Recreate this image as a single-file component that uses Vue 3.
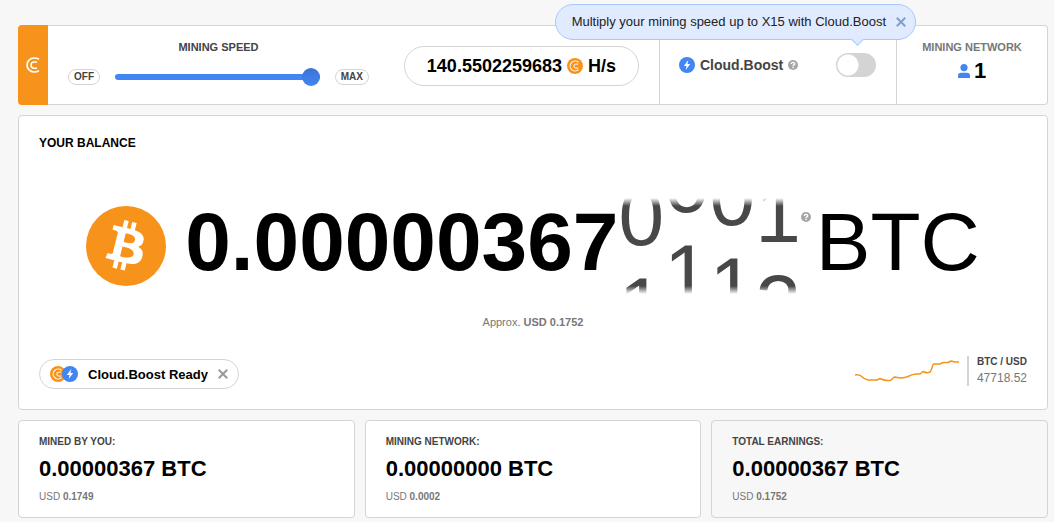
<script setup>
import { ref } from 'vue'

const speed = ref(100)
const boost = ref(false)

const digitHeight = 90
const reels = [
  { digits: [0, 1], progress: 26 },
  { digits: [0, 1], progress: 59 },
  { digits: [0, 1], progress: 46 },
  { digits: [1, 2], progress: 29 },
]

const stats = [
  { label: 'MINED BY YOU:', value: '0.00000367 BTC', usd: '0.1749', muted: false },
  { label: 'MINING NETWORK:', value: '0.00000000 BTC', usd: '0.0002', muted: false },
  { label: 'TOTAL EARNINGS:', value: '0.00000367 BTC', usd: '0.1752', muted: true },
]
</script>

<template>
  <main class="page">
    <section class="topbar">
      <div class="brand">
        <svg width="16" height="16" viewBox="0 0 16 16" fill="none" stroke="#fff" aria-hidden="true">
          <path d="M14 2.2Q12 1 9 1A7 7 0 0 0 9 15Q12 15 14 13.800" stroke-width="1.7" />
          <path d="M12 4.900H9.200A3.200 3.200 0 1 0 9.200 11.300H12" stroke-width="1.500" />
        </svg>
      </div>

      <div class="speed">
        <div class="slider-block">
          <label class="speed-title" for="speed">MINING SPEED</label>
          <div class="slider-row">
            <button class="tag" type="button" @click="speed = 0">OFF</button>
            <input id="speed" v-model="speed" class="slider" type="range" min="0" max="100" />
            <button class="tag" type="button" @click="speed = 100">MAX</button>
          </div>
        </div>
        <div class="hash">
          <span>140.5502259683</span>
          <svg width="16" height="16" viewBox="0 0 16 16" fill="none" stroke="#fff" aria-hidden="true">
            <circle cx="8" cy="8" r="8" fill="#f7931a" stroke="none" />
            <path d="M11.5 4.3A5 5 0 1 0 11.5 11.7" stroke-width="1.1" />
            <path d="M11.2 6.1H8.8A2 2 0 1 0 8.8 10.1H11.2" stroke-width="1" />
          </svg>
          <span>H/s</span>
        </div>
      </div>

      <div class="boost">
        <svg width="16" height="16" viewBox="0 0 16 16" aria-hidden="true">
          <circle cx="8" cy="8" r="8" fill="#4285f4" />
          <path d="M9.3 2.9L4.8 8.9H7.5L6.7 13.1L11.2 7.1H8.5Z" fill="#fff" />
        </svg>
        <label class="boost-name" for="boost">Cloud.Boost</label>
        <svg width="10" height="10" viewBox="0 0 10 10" aria-hidden="true">
          <circle cx="5" cy="5" r="5" fill="#a6a6a6" />
          <path d="M3.3 3.9C3.3 1.9 6.7 1.9 6.7 3.9C6.7 4.9 5.1 4.9 5.1 6" fill="none" stroke="#fff" stroke-width="1.4" />
          <rect x="4.3" y="6.7" width="1.5" height="1.4" fill="#fff" />
        </svg>
        <div class="switch-wrap">
          <input id="boost" v-model="boost" class="switch" type="checkbox" role="switch" />
          <div class="tooltip" role="tooltip">
            <span>Multiply your mining speed up to X15 with Cloud.Boost</span>
            <button class="close blue" type="button" aria-label="Close tip">
              <svg width="10" height="10" viewBox="0 0 10 10"><path d="M.8 .8L9.2 9.2M9.2 .8L.8 9.2" /></svg>
            </button>
          </div>
        </div>
      </div>

      <div class="network">
        <div class="network-title">MINING NETWORK</div>
        <div class="network-count">
          <svg width="12" height="14" viewBox="0 0 12 14" fill="#4285f4" aria-hidden="true">
            <circle cx="6" cy="3.6" r="3.6" />
            <path d="M0 14V12Q0 8.8 3.2 8.8H8.8Q12 8.8 12 12V14Z" />
          </svg>
          <span>1</span>
        </div>
      </div>
    </section>

    <section class="balance">
      <h2>YOUR BALANCE</h2>
      <div class="amount">
        <svg class="coin" viewBox="0 0 64 64" aria-hidden="true">
          <circle cx="32" cy="32" r="32" fill="#f7931a" />
          <path fill="#fff" d="M46.103 27.444c.637-4.258-2.605-6.547-7.038-8.074l1.438-5.768-3.511-.875-1.4 5.616c-.923-.23-1.871-.447-2.813-.662l1.41-5.653-3.509-.875-1.439 5.766c-.764-.174-1.514-.346-2.242-.527l.004-.018-4.842-1.209-.934 3.75s2.605.597 2.55.634c1.422.355 1.679 1.296 1.636 2.042l-1.638 6.571c.098.025.225.061.365.117l-.371-.092-2.296 9.205c-.174.432-.615 1.08-1.609.834.035.051-2.552-.637-2.552-.637l-1.743 4.019 4.569 1.139c.85.213 1.683.436 2.503.646l-1.453 5.834 3.507.875 1.439-5.772c.958.26 1.888.5 2.798.726l-1.434 5.745 3.511.875 1.453-5.823c5.987 1.133 10.489.676 12.384-4.739 1.527-4.36-.076-6.875-3.226-8.515 2.294-.529 4.022-2.038 4.483-5.155zM38.081 38.693c-1.085 4.36-8.426 2.003-10.806 1.412l1.928-7.729c2.38.594 10.012 1.77 8.878 6.317zM39.167 27.381c-.99 3.966-7.1 1.951-9.082 1.457l1.748-7.01c1.982.494 8.365 1.416 7.334 5.553z" />
        </svg>
        <span class="digits">0.00000367</span>
        <div class="reels">
          <div
            v-for="(reel, i) in reels"
            :key="i"
            :style="{ transform: `translateY(${-reel.progress}px)` }"
          >
            <span v-for="d in reel.digits" :key="d" class="reel-digit" :style="{ height: digitHeight + 'px' }">{{ d }}</span>
          </div>
        </div>
        <svg class="amount-help" width="10" height="10" viewBox="0 0 10 10" aria-hidden="true">
          <circle cx="5" cy="5" r="5" fill="#a6a6a6" />
          <path d="M3.3 3.9C3.3 1.9 6.7 1.9 6.7 3.9C6.7 4.9 5.1 4.9 5.1 6" fill="none" stroke="#fff" stroke-width="1.4" />
          <rect x="4.3" y="6.7" width="1.5" height="1.4" fill="#fff" />
        </svg>
        <span class="unit">BTC</span>
      </div>
      <div class="approx">Approx. <b>USD 0.1752</b></div>
      <div class="balance-foot">
        <div class="ready">
          <svg width="28" height="16" viewBox="0 0 28 16" fill="none" stroke="#fff" aria-hidden="true">
            <circle cx="8" cy="8" r="8" fill="#f7931a" stroke="none" />
            <path d="M11.5 4.3A5 5 0 1 0 11.5 11.7" stroke-width="1.1" />
            <path d="M11.2 6.1H8.8A2 2 0 1 0 8.8 10.1H11.2" stroke-width="1" />
            <circle cx="20" cy="8" r="8" fill="#4285f4" stroke="none" />
            <path d="M21.3 2.9L16.8 8.9H19.5L18.7 13.1L23.2 7.1H20.5Z" fill="#fff" stroke="none" />
          </svg>
          <span>Cloud.Boost Ready</span>
          <button class="close" type="button" aria-label="Dismiss">
            <svg width="10" height="10" viewBox="0 0 10 10"><path d="M.8 .8L9.2 9.2M9.2 .8L.8 9.2" /></svg>
          </button>
        </div>
        <div class="rate">
          <svg width="104" height="30" viewBox="0 0 104 30" fill="none" stroke="#f7931a" stroke-width="1.5" stroke-linejoin="round" aria-hidden="true">
            <path d="M0 19C2 18.500 4 18 6 20S10 23.500 13 24H22L25 22.500C28 24 31 25 35 24.500C38 24 37 21 40 21C44 22 50 22 53 20.500S58 18 61 18H65L68 15.500C71 17 73 17 75 16S77 8 79 8H85L88 6.500H93L96 5L100 6H104" />
          </svg>
          <div class="rate-text">
            <b>BTC / USD</b>
            <span>47718.52</span>
          </div>
        </div>
      </div>
    </section>

    <section class="stats">
      <article v-for="s in stats" :key="s.label" class="stat" :class="{ muted: s.muted }">
        <h3>{{ s.label }}</h3>
        <div class="stat-value">{{ s.value }}</div>
        <div class="stat-usd">USD <b>{{ s.usd }}</b></div>
      </article>
    </section>
  </main>
</template>

<style>
body {
  margin: 0;
  background: #f7f7f7;
}
</style>

<style scoped>
* {
  box-sizing: border-box;
}
.page {
  padding: 25px 6px 4px 18px;
  display: flex;
  flex-direction: column;
  gap: 10px;
  font-family: 'Liberation Sans', Arial, sans-serif;
  color: #000;
}
svg {
  display: block;
  flex: none;
}
button {
  font-family: inherit;
  cursor: pointer;
}
.topbar {
  display: grid;
  grid-template-columns: 30px 1fr 237px 151px;
  min-height: 80px;
}
.topbar > div {
  background: #fff;
  border: 1px solid #d4d4d4;
  border-left: 0;
}
.topbar > .brand {
  background: #f7931a;
  border: 0;
  border-radius: 4px 0 0 4px;
  display: flex;
  align-items: center;
  justify-content: center;
}
.speed {
  display: flex;
  justify-content: space-between;
  padding: 0 20px;
}
.slider-block {
  width: 301px;
  padding-top: 14px;
}
.speed-title {
  display: block;
  text-align: center;
  font-size: 11px;
  line-height: 14px;
  font-weight: bold;
  color: #444;
}
.slider-row {
  display: flex;
  align-items: center;
  gap: 15px;
  margin-top: 14px;
}
.tag {
  height: 16px;
  padding: 0 5px;
  border: 1px solid #d4d4d4;
  border-radius: 8px;
  background: #fff;
  color: #444;
  font-size: 10px;
  line-height: 14px;
  font-weight: bold;
}
.slider {
  appearance: none;
  flex: 1;
  min-width: 0;
  height: 18px;
  margin: 0;
  background: none;
}
.slider::-webkit-slider-runnable-track {
  height: 6px;
  border-radius: 3px;
  background: #4285f4;
}
.slider::-webkit-slider-thumb {
  appearance: none;
  width: 18px;
  height: 18px;
  margin-top: -6px;
  border: 0;
  border-radius: 50%;
  background: linear-gradient(#3b73d6, #4285f4);
}
.hash {
  display: flex;
  align-items: center;
  gap: 5px;
  align-self: flex-start;
  height: 40px;
  margin-top: 20px;
  padding: 0 22px;
  border: 1px solid #d4d4d4;
  border-radius: 20px;
  font-size: 18px;
  font-weight: bold;
}
.boost {
  display: flex;
  align-items: center;
  gap: 5px;
  padding: 0 20px 1px 19px;
}
.boost-name {
  font-size: 14px;
  font-weight: bold;
  color: #444;
}
.switch-wrap {
  position: relative;
  margin-left: auto;
}
.switch {
  appearance: none;
  display: block;
  width: 40px;
  height: 24px;
  margin: 0;
  border-radius: 12px;
  background: radial-gradient(circle at 12px 12px, #fff 10px, transparent 11px) #d4d4d4;
}
.switch:checked {
  background: radial-gradient(circle at 28px 12px, #fff 10px, transparent 11px) #4285f4;
}
.tooltip {
  position: absolute;
  right: -40px;
  bottom: 37px;
  display: flex;
  align-items: center;
  gap: 10px;
  height: 36px;
  padding: 0 9px 0 16px;
  border: 1px solid #a6c8ff;
  border-radius: 18px;
  background: #e0ebff;
  color: #222;
  font-size: 13px;
  white-space: nowrap;
}
.tooltip::after {
  content: '';
  position: absolute;
  right: 53px;
  bottom: -5px;
  width: 8px;
  height: 8px;
  border: solid #a6c8ff;
  border-width: 0 1px 1px 0;
  background: #e0ebff;
  transform: rotate(45deg);
}
.close {
  padding: 0;
  border: 0;
  background: none;
  stroke: #999;
  stroke-width: 2;
}
.close.blue {
  stroke: #809fce;
}
.topbar > .network {
  border-radius: 0 4px 4px 0;
  padding-top: 14px;
  text-align: center;
}
.network-title {
  font-size: 11px;
  line-height: 14px;
  font-weight: bold;
  color: #777;
}
.network-count {
  display: flex;
  justify-content: center;
  align-items: center;
  gap: 4px;
  margin-top: 4px;
  font-size: 22px;
  line-height: 26px;
  font-weight: bold;
}
.balance {
  display: flex;
  flex-direction: column;
  padding: 20px;
  background: #fff;
  border: 1px solid #d4d4d4;
  border-radius: 4px;
}
h2,
h3 {
  margin: 0;
}
h2 {
  font-size: 12px;
  line-height: 14px;
}
.amount {
  display: flex;
  justify-content: center;
  align-items: center;
  height: 96px;
  margin-top: 48px;
  font-size: 82px;
  line-height: 90px;
}
.coin {
  width: 80px;
  height: 80px;
  margin-right: 19px;
}
.digits,
.unit {
  padding-bottom: 8px;
}
.digits {
  font-weight: bold;
}
.reels {
  display: flex;
  height: 96px;
  overflow: hidden;
  color: #484848;
  mask-image: linear-gradient(transparent, #000 8px, #000 88px, transparent);
}
.reel-digit {
  display: block;
}
.amount-help {
  align-self: flex-start;
  margin: 14px 5px 0 0;
}
.approx {
  margin-top: 21px;
  text-align: center;
  font-size: 11px;
  line-height: 14px;
  color: #777;
}
.balance-foot {
  display: flex;
  justify-content: space-between;
  align-items: center;
  margin-top: 30px;
}
.ready {
  display: flex;
  align-items: center;
  gap: 10px;
  height: 30px;
  padding: 0 10px;
  border: 1px solid #d4d4d4;
  border-radius: 15px;
  font-size: 13px;
  font-weight: bold;
}
.rate {
  display: flex;
  align-items: center;
  gap: 8px;
  margin-top: -6px;
}
.rate-text {
  padding-left: 8px;
  border-left: 2px solid #d4d4d4;
  color: #777;
  font-size: 12px;
  line-height: 16px;
}
.rate-text b,
.rate-text span {
  display: block;
}
.rate-text b {
  margin-bottom: 2px;
  font-size: 10px;
  line-height: 12px;
  color: #444;
}
.stats {
  display: grid;
  grid-template-columns: repeat(3, 1fr);
  gap: 10px;
}
.stat {
  padding: 14px 20px 13px;
  background: #fff;
  border: 1px solid #d4d4d4;
  border-radius: 4px;
}
.stat.muted {
  background: #f7f7f7;
}
h3 {
  font-size: 10px;
  line-height: 14px;
  color: #444;
}
.stat-value {
  margin: 7px 0 8px;
  font-size: 22px;
  line-height: 26px;
  font-weight: bold;
}
.stat-usd {
  font-size: 10px;
  line-height: 14px;
  color: #777;
}
</style>
